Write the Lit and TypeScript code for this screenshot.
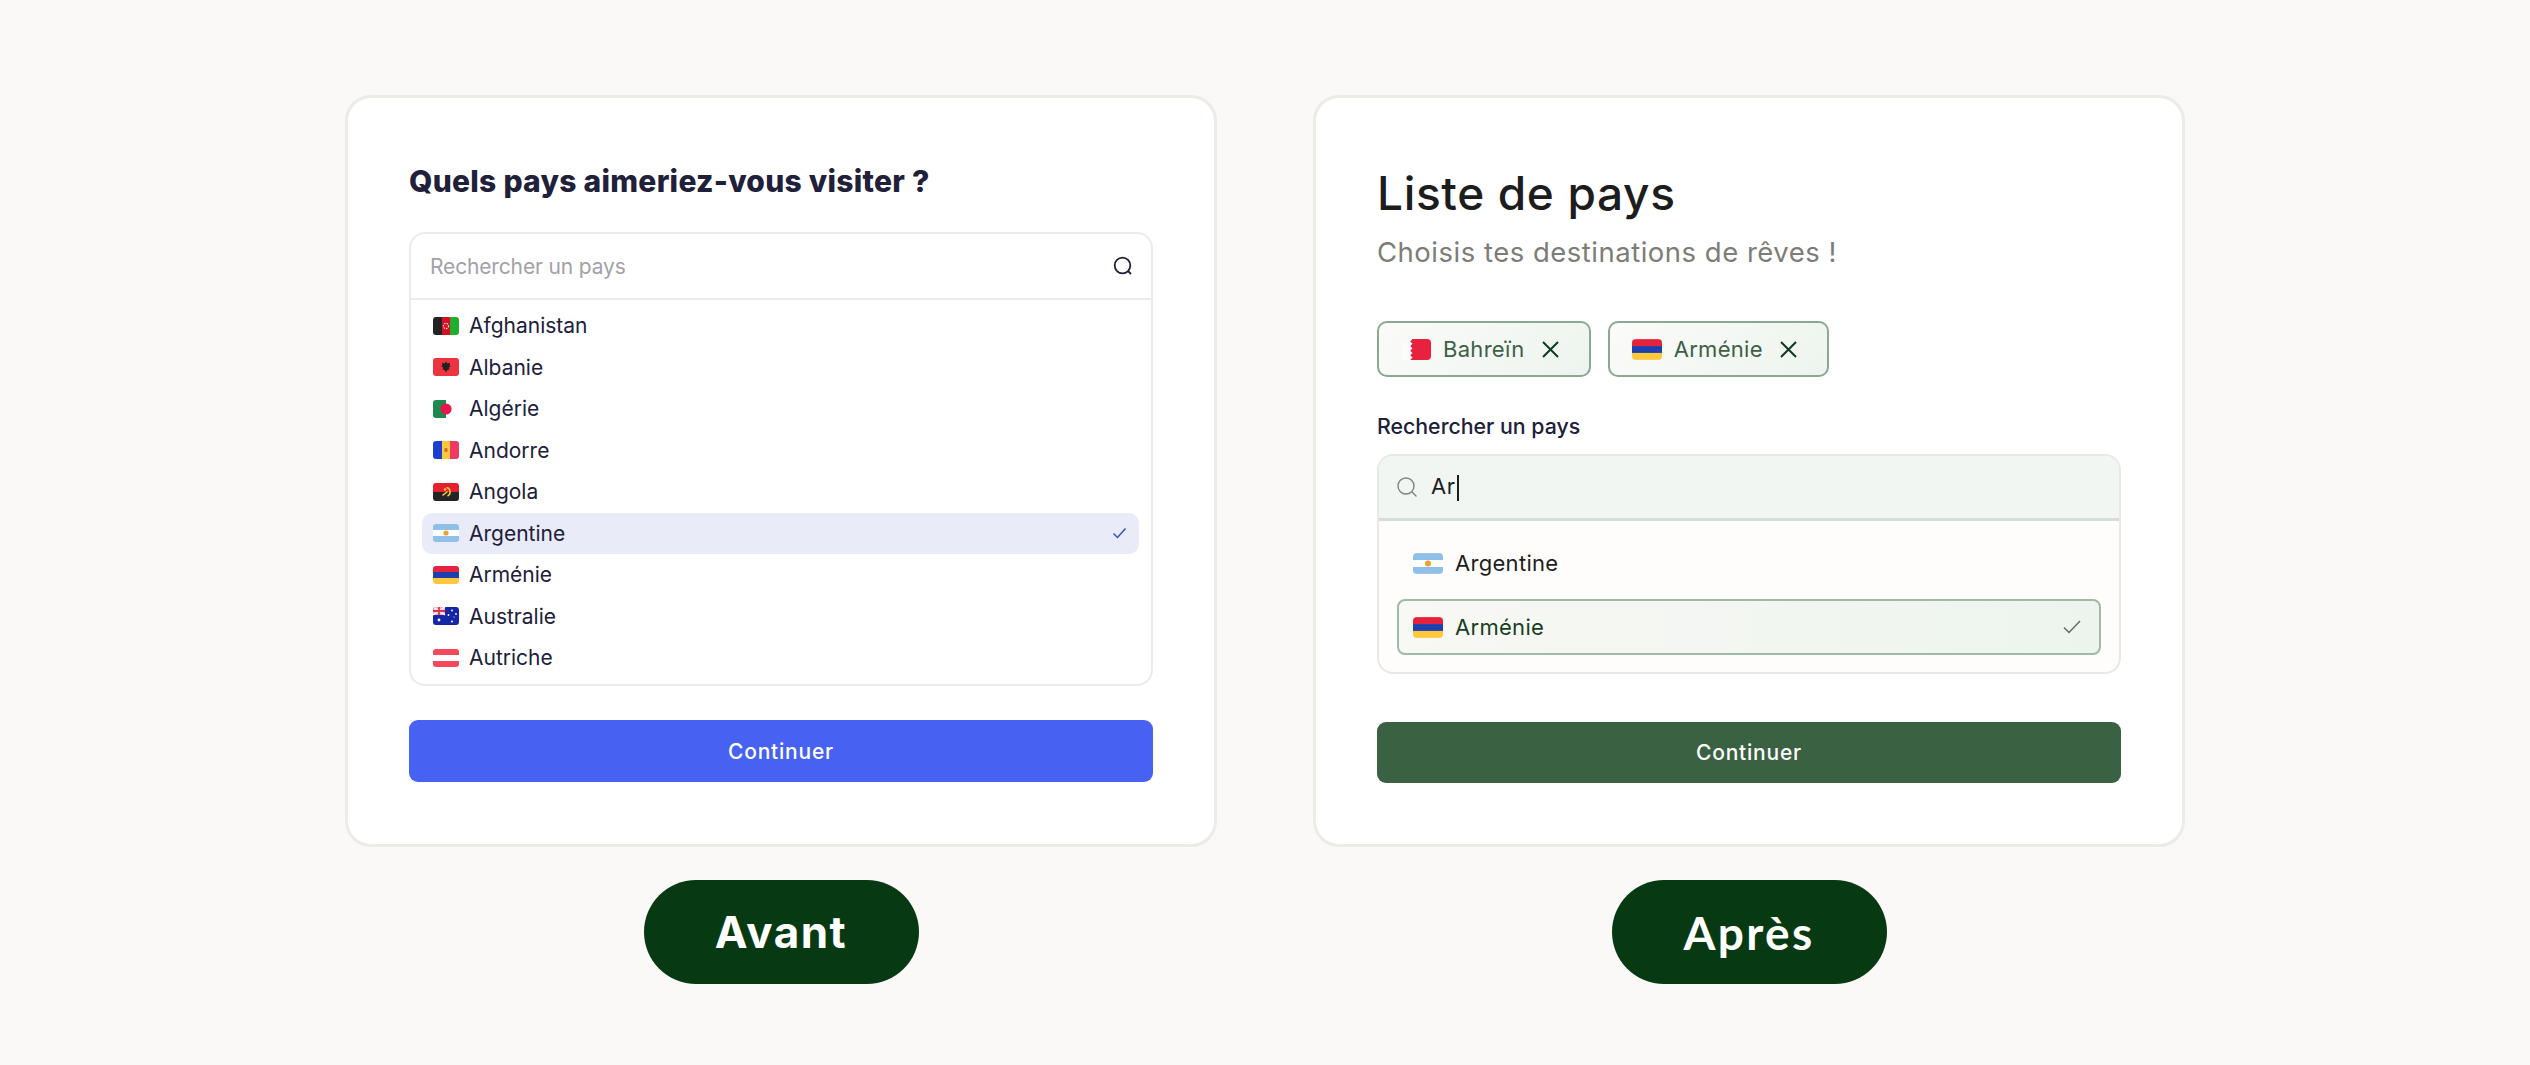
import { LitElement, html, css, svg } from "lit";
import { customElement } from "lit/decorators.js";

const flags: Record<string, any> = {
  af: svg`<rect width="9" height="18" fill="#242424"/><rect x="9" width="8" height="18" fill="#d80f23"/><rect x="17" width="9" height="18" fill="#1fae2e"/><circle cx="13" cy="9" r="2.6" fill="none" stroke="#f5d5c8" stroke-width="1.2" stroke-dasharray="1.5 1"/>`,
  al: svg`<rect width="26" height="18" fill="#ee3340"/><path d="M13 3.5l1.4 2 2.8-.8-.7 2.6 1.4.6-2 1.6.4 2-2 .4L13 14.5l-1.3-2.6-2-.4.4-2-2-1.6 1.4-.6-.7-2.6 2.8.8z" fill="#222"/>`,
  dz: svg`<rect width="26" height="18" fill="#fdfdfd"/><rect width="13" height="18" fill="#1b8a4c"/><circle cx="13" cy="9" r="5.6" fill="#e8174a"/>`,
  ad: svg`<rect width="9" height="18" fill="#1b3fd0"/><rect x="9" width="8" height="18" fill="#fbc93a"/><rect x="17" width="9" height="18" fill="#ee3a62"/><rect x="11.5" y="7" width="3" height="4" rx="1" fill="#d8662c"/>`,
  ao: svg`<rect width="26" height="9" fill="#e4202f"/><rect y="9" width="26" height="9" fill="#242424"/><path d="M13.500 4.500a4.500 4.500 0 0 1 1 8.500" fill="none" stroke="#fbc93a" stroke-width="1.600"/><path d="M9.500 12.500l5-4" stroke="#fbc93a" stroke-width="1.600"/><circle cx="12" cy="6.500" r="1.200" fill="#fbc93a"/>`,
  ar: svg`<rect width="26" height="18" fill="#8fc0ea"/><rect y="6" width="26" height="6" fill="#fff"/><circle cx="13" cy="9" r="2.600" fill="#f0a030"/>`,
  am: svg`<rect width="26" height="6" fill="#e6223c"/><rect y="6" width="26" height="6" fill="#1e3fb0"/><rect y="12" width="26" height="6" fill="#fdc83c"/>`,
  au: svg`<rect width="26" height="18" fill="#1626a8"/><rect width="12" height="8" fill="#f4b6c4"/><path d="M0 0l12 8M12 0L0 8" stroke="#fff" stroke-width="1.400"/><path d="M6 0v8M0 4h12" stroke="#e8304a" stroke-width="1.800"/><g fill="#fff"><circle cx="6" cy="13" r="1.400"/><circle cx="19" cy="3.500" r=".9"/><circle cx="19" cy="14.500" r="1"/><circle cx="15.500" cy="8" r=".9"/><circle cx="23" cy="7" r=".9"/><circle cx="21" cy="10" r=".6"/></g>`,
  at: svg`<rect width="26" height="18" fill="#f5485a"/><rect y="6" width="26" height="6" fill="#fff"/>`,
  bh: svg`<rect width="26" height="18" fill="#fbfbfb"/><path d="M8 0h18v18H8l2-2-2-2 2-2-2-2 2-2-2-2 2-2-2-2 2-2z" fill="#e8213f"/>`,
};

const flag = (k: string, big = false) => html`<svg class="flag ${big ? "big" : ""}" viewBox="0 0 26 18">${flags[k]}</svg>`;

const left = [
  ["af", "Afghanistan"], ["al", "Albanie"], ["dz", "Algérie"], ["ad", "Andorre"], ["ao", "Angola"],
  ["ar", "Argentine"], ["am", "Arménie"], ["au", "Australie"], ["at", "Autriche"],
];

const closeIcon = html`<svg class="x" viewBox="0 0 17 17"><path d="M1 1l15 15M16 1L1 16" fill="none" stroke="#0e3a1e" stroke-width="2"/></svg>`;

@customElement("app-root")
export class AppRoot extends LitElement {
  static styles = css`
    :host { display: block; height: 1065px; overflow: hidden; background: #fbf9f7; font-family: "Inter", "Liberation Sans", sans-serif; color: #20203a; }
    .page { display: flex; justify-content: center; gap: 96px; padding-top: 95px; }
    .col { width: 872px; display: flex; flex-direction: column; align-items: center; }
    .card { width: 100%; box-sizing: border-box; height: 752px; border: 3px solid #ebebe8; border-radius: 26px; background: #fff; padding: 62px 61px 61px; display: flex; flex-direction: column; }
    .pill { margin-top: 33px; width: 275px; height: 104px; border-radius: 52px; background: #073a12; color: #fff; display: flex; align-items: center; justify-content: center; font-weight: 700; }
    .pill.a { font-family: "Inter", sans-serif; font-size: 44px; letter-spacing: 1.500px; }
    .pill.b { font-family: "Lato", sans-serif; font-size: 46px; letter-spacing: 2.300px; }

    .q { margin: 1px 0 0; height: 40px; line-height: 40px; font-size: 30px; font-weight: 800; color: #20203a; letter-spacing: .27px; font-family: "Inter", sans-serif; }
    .box { margin-top: 31px; height: 454px; box-sizing: border-box; border: 2px solid #ebebeb; border-radius: 16px; overflow: hidden; }
    .search { height: 66px; box-sizing: border-box; border-bottom: 2px solid #ecebea; display: flex; align-items: center; justify-content: space-between; padding: 0 18px 0 19px; }
    .ph { font-size: 21px; color: #a2a2a8; letter-spacing: -.15px; }
    .ic { width: 20px; height: 20px; }
    .list { padding: 5px 12px 2px 11px; }
    .row { height: 41.500px; display: flex; align-items: center; padding: 0 12px 0 11px; border-radius: 10px; gap: 10px; font-size: 21px; }
    .row.sel { background: #e9ebf8; }
    .row .name { flex: 1; }
    .flag { width: 26px; height: 18px; border-radius: 3px; flex: none; }
    .flag.big { width: 30px; height: 21px; border-radius: 4px; }
    .chk { width: 15px; height: 12px; }
    .btn { height: 62px; border-radius: 9px; display: flex; align-items: center; justify-content: center; color: #fff; font-size: 21px; font-weight: 500; letter-spacing: .8px; }
    .btn.blue { margin-top: 34px; background: #4761f2; }
    .btn.green { margin-top: 48px; height: 61px; background: #3b6143; }

    .t { margin: 0; height: 66px; line-height: 66px; font-size: 46px; font-weight: 500; color: #1d1d1d; font-family: "Inter", sans-serif; letter-spacing: .65px; }
    .sub { margin: 7px 0 0; height: 38px; line-height: 38px; font-size: 27.500px; color: #7d7d78; letter-spacing: .5px; }
    .chips { margin-top: 50px; display: flex; gap: 17px; }
    .chip { height: 56px; box-sizing: border-box; border: 2px solid #8aa892; border-radius: 10px; background: linear-gradient(135deg, #fbfbf9, #edf4ee); display: flex; align-items: center; padding: 0 30px 0 22px; font-size: 22px; letter-spacing: .3px; color: #3d5f45; }
    .chip .flag { margin-right: 12px; }
    .x { width: 17px; height: 17px; margin-left: 17px; }
    .lab { margin-top: 34px; height: 30px; line-height: 30px; font-size: 21.300px; font-weight: 500; color: #20203a; }
    .box2 { margin-top: 13px; height: 221px; box-sizing: border-box; border: 2px solid #e8e9e6; border-radius: 16px; background: #fefdfb; overflow: hidden; }
    .s2 { height: 65px; box-sizing: border-box; background: #f1f6f2; border-bottom: 3px solid #d4ddd7; display: flex; align-items: center; padding: 0 18px; gap: 14px; font-size: 22px; color: #1d1d1d; letter-spacing: .6px; }
    .s2 .caret { display: inline-block; width: 2px; height: 26px; background: #1d1d1d; vertical-align: middle; margin-left: 1px; }
    .list2 { padding: 14px 18px 0; display: flex; flex-direction: column; gap: 8px; }
    .r2 { height: 56px; box-sizing: border-box; display: flex; align-items: center; padding: 0 18px 0 14px; gap: 12px; font-size: 22px; letter-spacing: .3px; color: #1d1d1d; border: 2px solid transparent; }
    .r2.on { border-color: #a0baa6; border-radius: 8px; background: linear-gradient(90deg, #f8f8f5, #edf4ee); color: #17401f; }
    .r2 .name { flex: 1; }
    .chk2 { width: 18px; height: 14px; }
  `;

  render() {
    return html`<div class="page">
      <div class="col">
        <div class="card">
          <h2 class="q">Quels pays aimeriez-vous visiter ?</h2>
          <div class="box">
            <div class="search"><span class="ph">Rechercher un pays</span>
              <svg class="ic" viewBox="0 0 20 20"><circle cx="9.500" cy="9.500" r="7.800" fill="none" stroke="#20203a" stroke-width="1.800"/><path d="M15 15l3 3" stroke="#20203a" stroke-width="1.800" fill="none"/></svg>
            </div>
            <div class="list">
              ${left.map(([k, n]) => html`<div class="row ${k === "ar" ? "sel" : ""}">${flag(k)}<span class="name">${n}</span>
                ${k === "ar" ? html`<svg class="chk" viewBox="0 0 15 12"><path d="M1.500 6.500L5.500 10.500 13.500 1.500" fill="none" stroke="#3452c8" stroke-width="1.500"/></svg>` : ""}</div>`)}
            </div>
          </div>
          <div class="btn blue">Continuer</div>
        </div>
        <div class="pill a">Avant</div>
      </div>
      <div class="col">
        <div class="card">
          <h1 class="t">Liste de pays</h1>
          <p class="sub">Choisis tes destinations de rêves !</p>
          <div class="chips">
            <div class="chip">${flag("bh", true)}<span>Bahreïn</span>${closeIcon}</div>
            <div class="chip">${flag("am", true)}<span>Arménie</span>${closeIcon}</div>
          </div>
          <div class="lab">Rechercher un pays</div>
          <div class="box2">
            <div class="s2">
              <svg class="ic" viewBox="0 0 20 20"><circle cx="9" cy="9" r="8" fill="none" stroke="#7d857f" stroke-width="1.400"/><path d="M15 15l4.500 4.500" stroke="#7d857f" stroke-width="1.400" fill="none"/></svg>
              <span>Ar<span class="caret"></span></span>
            </div>
            <div class="list2">
              <div class="r2">${flag("ar", true)}<span class="name">Argentine</span></div>
              <div class="r2 on">${flag("am", true)}<span class="name">Arménie</span>
                <svg class="chk2" viewBox="0 0 18 14"><path d="M1 7.500L6 12.500 17 1" fill="none" stroke="#5c6f60" stroke-width="1.500"/></svg></div>
            </div>
          </div>
          <div class="btn green">Continuer</div>
        </div>
        <div class="pill b">Après</div>
      </div>
    </div>`;
  }
}
